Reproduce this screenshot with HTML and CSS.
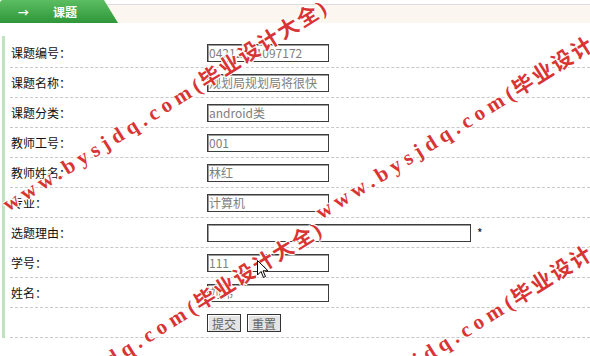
FILE: index.html
```html
<!DOCTYPE html>
<html lang="zh-CN">
  <head>
    <meta charset="UTF-8" />
    <title>课题</title>
    <link rel="stylesheet" href="styles.css">
  </head>
  <body>
    <div class="page">
      <!-- tab header -->
      <div class="tabbar">
        <div class="tab">
          <span class="arrow">&rarr;</span>
          <span class="tab-title">课题</span>
        </div>
        <div class="tab-rest"></div>
      </div>

      <div class="panel">
        <form action="" name="form">
          <div class="row">
            <span class="label">课题编号：</span>
            <span class="value"><input type="text" class="box" value="04212311097172" readonly /></span>
          </div>
          <div class="row">
            <span class="label">课题名称：</span>
            <span class="value"><input type="text" class="box" value="规划局规划局将很快" readonly /></span>
          </div>
          <div class="row">
            <span class="label">课题分类：</span>
            <span class="value"><input type="text" class="box" value="android类" readonly /></span>
          </div>
          <div class="row">
            <span class="label">教师工号：</span>
            <span class="value"><input type="text" class="box" value="001" readonly /></span>
          </div>
          <div class="row">
            <span class="label">教师姓名：</span>
            <span class="value"><input type="text" class="box" value="林红" readonly /></span>
          </div>
          <div class="row">
            <span class="label">专业：</span>
            <span class="value"><input type="text" class="box" value="计算机" readonly /></span>
          </div>
          <div class="row">
            <span class="label">选题理由：</span>
            <span class="value"><input type="text" class="box wide" name="reason" /><span class="star">*</span></span>
          </div>
          <div class="row">
            <span class="label">学号：</span>
            <span class="value"><input type="text" class="box" value="111" readonly /></span>
          </div>
          <div class="row">
            <span class="label">姓名：</span>
            <span class="value"><input type="text" class="box" value="刘伟" readonly /></span>
          </div>
          <div class="row">
            <span class="label"></span>
            <span class="value">
              <input type="submit" class="btn" value="提交" />
              <input type="reset" class="btn" value="重置" />
            </span>
          </div>
        </form>
      </div>

      <!-- site watermark over the screenshot -->
      <span class="mark mark1">www.bysjdq.com<span class="cn">(毕业设计大全)</span></span>
      <span class="mark mark2">www.bysjdq.com<span class="cn">(毕业设计大全)</span></span>
      <span class="mark mark3">www.bysjdq.com<span class="cn">(毕业设计大全)</span></span>
      <span class="mark mark4">www.bysjdq.com<span class="cn">(毕业设计大全)</span></span>

      <svg class="cursor" width="12" height="19" viewBox="0 0 12 19">
        <path d="M0.5 0.5 L0.5 15 L4 11.5 L6.5 17.5 L8.5 16.5 L6 10.8 L11 10.8 Z" fill="#fff" stroke="#000" stroke-width="1" />
      </svg>
    </div>
  </body>
</html>
```

FILE: styles.css
```css
body {
  margin: 0;
  background: #fff;
  font-family: "Noto Sans CJK SC", "Liberation Sans", sans-serif;
  font-size: 12px;
  color: #111;
}
.page {
  position: relative;
  width: 590px;
  height: 356px;
  overflow: hidden;
}
.tabbar {
  display: flex;
  height: 23px;
}
.tab {
  position: relative;
  z-index: 1;
  width: 118px;
  height: 23px;
  flex: none;
  display: flex;
  align-items: center;
  background: linear-gradient(#5cbd62, #2f963a);
  clip-path: polygon(0 0, 104px 0, 118px 100%, 0 100%);
  border-top-left-radius: 3px;
  color: #fff;
}
.arrow {
  margin-left: 18px;
  font-size: 11px;
  font-weight: bold;
}
.tab-title {
  margin-left: 24px;
  font-weight: bold;
  font-size: 12px;
}
.tab-rest {
  flex: 1;
  margin: 4px 0 0 -16px;
  border-top: 1px solid #dcdcdc;
  background: #fcf6f1;
}
.panel {
  margin: 13px 0 0 2px;
  padding-top: 2px;
  border-left: 3px solid #bfe3bf;
}
.row {
  display: grid;
  grid-template-columns: 197px 1fr;
  align-items: center;
  height: 29px;
  margin-left: 5px;
  border-bottom: 1px dashed #c8c8c8;
}
.label {
  padding-left: 1px;
}
.value {
  display: flex;
  align-items: center;
}
.box {
  box-sizing: border-box;
  width: 122px;
  height: 18px;
  margin: 0;
  padding: 0 1px;
  border: 1px solid #3c3c3c;
  box-shadow: inset 1px 1px 0 #9a9a9a;
  font-family: "Noto Sans CJK SC", "Liberation Sans", sans-serif;
  font-size: 12px;
  color: #808080;
  background: #fff;
}
.wide {
  width: 264px;
}
.star {
  margin-left: 6px;
  font-size: 12px;
}
.btn {
  box-sizing: border-box;
  width: 34px;
  height: 18px;
  margin: 0 6px 0 0;
  padding: 0;
  border: 1px solid #333;
  box-shadow: inset 1px 1px 0 #fff;
  background: #e4e4e4;
  font-family: "Noto Sans CJK SC", "Liberation Sans", sans-serif;
  font-size: 12px;
  color: #666;
}
.mark {
  position: absolute;
  white-space: nowrap;
  transform-origin: 0 100%;
  transform: rotate(-32deg);
  font-family: "Liberation Serif", "Noto Sans CJK SC", serif;
  font-weight: bold;
  font-size: 21px;
  line-height: 24px;
  letter-spacing: 5px;
  color: #d93434;
  text-shadow: 1px 1px 0 #fff, -1px -1px 0 #fff, 1px -1px 0 #fff, -1px 1px 0 #fff;
  pointer-events: none;
}
.mark .cn {
  letter-spacing: 2px;
}
.mark1 {
  left: 11px;
  top: 192px;
}
.mark2 {
  left: 324px;
  top: 200px;
}
.mark3 {
  left: 6px;
  top: 414px;
}
.mark4 {
  left: 323px;
  top: 409px;
}
.cursor {
  position: absolute;
  left: 257px;
  top: 260px;
}
```
